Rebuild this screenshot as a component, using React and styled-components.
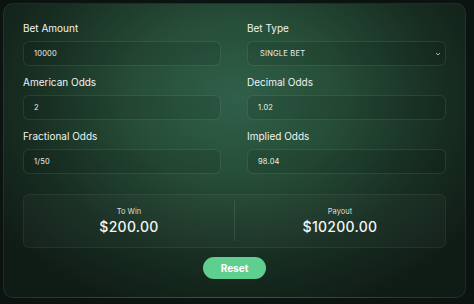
import React from 'react'
import styled, { createGlobalStyle } from 'styled-components'

const GlobalStyle = createGlobalStyle`
  html, body {
    margin: 0;
    padding: 0;
    background: #0b1410;
    font-family: 'Inter', 'Liberation Sans', sans-serif;
  }
  * {
    box-sizing: border-box;
  }
`

const Page = styled.div`
  width: 474px;
  height: 304px;
  padding: 3px 8px 6px 3px;
  background: #0b1410;
`

const Card = styled.div`
  width: 463px;
  height: 295px;
  border-radius: 10px;
  border: 1px solid rgba(255, 255, 255, 0.07);
  padding: 18px 19px 18px 19px;
  background: radial-gradient(
    ellipse 64% 78% at 50% 32%,
    #30604a 0%,
    #264d37 35%,
    #182e22 70%,
    #0f1b15 100%
  );
  display: flex;
  flex-direction: column;
  align-items: center;
`

const Grid = styled.div`
  width: 100%;
  display: grid;
  grid-template-columns: 198px 199px;
  column-gap: 26px;
  row-gap: 10px;
`

const Field = styled.div`
  display: flex;
  flex-direction: column;
  gap: 7px;
`

const Label = styled.label`
  font-size: 10px;
  line-height: 12px;
  color: #f1f4f2;
  font-weight: 400;
`

const Input = styled.div`
  height: 25px;
  border-radius: 6px;
  border: 1px solid rgba(255, 255, 255, 0.09);
  background: rgba(0, 0, 0, 0.08);
  color: #eef2ef;
  font-size: 7.5px;
  padding: 0 ${p => (p.$select ? '12px' : '10px')};
  display: flex;
  align-items: center;
  justify-content: space-between;
  letter-spacing: 0.2px;
`

const Chevron = styled.svg`
  width: 6px;
  height: 6px;
  margin-right: -8px;
`

const Results = styled.div`
  width: 100%;
  height: 55px;
  margin-top: 20px;
  border-radius: 6px;
  border: 1px solid rgba(255, 255, 255, 0.06);
  background: rgba(255, 255, 255, 0.025);
  display: grid;
  grid-template-columns: 1fr 1px 1fr;
  align-items: center;
`

const Divider = styled.div`
  height: 40px;
  background: rgba(255, 255, 255, 0.1);
`

const Stat = styled.div`
  display: flex;
  flex-direction: column;
  align-items: center;
  gap: 2px;
  color: #f3f5f4;
`

const StatLabel = styled.span`
  font-size: 7.5px;
  color: #d9dfdb;
`

const StatValue = styled.span`
  font-size: 14px;
  font-weight: 500;
  letter-spacing: 0.3px;
`

const ResetButton = styled.button`
  margin-top: 9px;
  width: 63px;
  height: 22px;
  border: none;
  border-radius: 11px;
  background: #5fcf8f;
  color: #ffffff;
  font-family: inherit;
  font-size: 10px;
  font-weight: 700;
  cursor: pointer;
`

const fields = [
  { label: 'Bet Amount', value: '10000' },
  { label: 'Bet Type', value: 'SINGLE BET', select: true },
  { label: 'American Odds', value: '2' },
  { label: 'Decimal Odds', value: '1.02' },
  { label: 'Fractional Odds', value: '1/50' },
  { label: 'Implied Odds', value: '98.04' }
]

const App = () => {
  return (
    <Page>
      <GlobalStyle />
      <Card>
        <Grid>
          {fields.map(f => (
            <Field key={f.label}>
              <Label>{f.label}</Label>
              <Input $select={f.select}>
                <span>{f.value}</span>
                {f.select && (
                  <Chevron viewBox='0 0 10 10'>
                    <path
                      d='M2 3.5 L5 6.5 L8 3.5'
                      fill='none'
                      stroke='#dfe5e1'
                      strokeWidth='1.4'
                    />
                  </Chevron>
                )}
              </Input>
            </Field>
          ))}
        </Grid>
        <Results>
          <Stat>
            <StatLabel>To Win</StatLabel>
            <StatValue>$200.00</StatValue>
          </Stat>
          <Divider />
          <Stat>
            <StatLabel>Payout</StatLabel>
            <StatValue>$10200.00</StatValue>
          </Stat>
        </Results>
        <ResetButton type='button'>Reset</ResetButton>
      </Card>
    </Page>
  )
}

export default App
